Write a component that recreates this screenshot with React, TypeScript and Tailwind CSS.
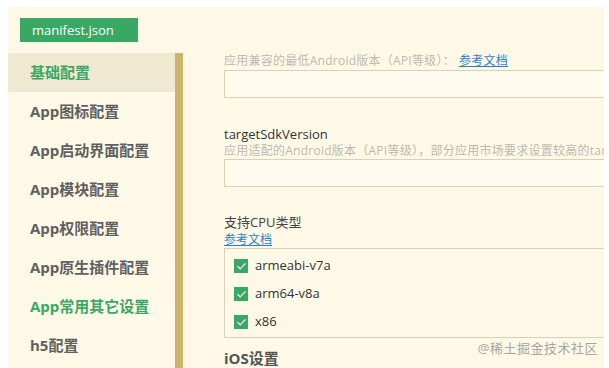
import { Check } from "lucide-react";

const menu = [
  { label: "基础配置", active: true },
  { label: "App图标配置" },
  { label: "App启动界面配置" },
  { label: "App模块配置" },
  { label: "App权限配置" },
  { label: "App原生插件配置" },
  { label: "App常用其它设置", green: true },
  { label: "h5配置" },
];

const cpus = ["armeabi-v7a", "arm64-v8a", "x86"];

const font = "font-['Open_Sans','Noto_Sans_CJK_SC',sans-serif]";

export default function App() {
  return (
    <div className={`w-[609px] h-[368px] bg-white overflow-hidden pl-2 pt-[7px] pr-[5px] relative ${font}`}>
      <div className="bg-[#fef9e7] h-full flex flex-col">
        {/* tab header */}
        <div className="h-[46px] shrink-0 pl-3 pt-[11px]">
          <div className="w-[118px] h-6 bg-[#3aa865] text-white text-[13px] leading-6 pl-[12px]">
            manifest.json
          </div>
        </div>

        <div className="flex flex-1 min-h-0">
          {/* sidebar */}
          <div className="w-[167px] shrink-0 flex flex-col">
            {menu.map((m) => (
              <div
                key={m.label}
                className={`h-[39px] shrink-0 flex items-center pl-[22px] text-[15px] font-bold ${
                  m.active ? "bg-[#f0e9d1] text-[#3aa865]" : m.green ? "text-[#3aa865]" : "text-[#606060]"
                }`}
              >
                {m.label}
              </div>
            ))}
          </div>
          <div className="w-2 shrink-0 bg-[#cdb46b]" />

          {/* content */}
          <div className="flex-1 min-w-0 overflow-hidden pl-[41px]">
            <div className="w-[390px]">
              <div className="text-[12px] leading-4 text-[#bdb9ad] whitespace-nowrap tracking-[0.25px]">
                应用兼容的最低Android版本（API等级）：
                <span className="text-[#2a7fd4] underline ml-1">参考文档</span>
              </div>
              <div className="mt-px h-7 border border-[#d9d3af] bg-[#fffbee]" />

              <div className="mt-[27px] text-[13px] leading-[18px] text-[#333]">targetSdkVersion</div>
              <div className="text-[12px] leading-4 text-[#bdb9ad] whitespace-nowrap tracking-[0.25px]">
                应用适配的Android版本（API等级），部分应用市场要求设置较高的targetSdkVersion
              </div>
              <div className="h-7 border border-[#d9d3af] bg-[#fffbee]" />

              <div className="mt-[26px] text-[13px] leading-[18px] text-[#444]">支持CPU类型</div>
              <div className="text-[12px] leading-4 mt-px text-[#2a7fd4] underline">参考文档</div>
              <div className="border border-[#d6d1b8] pt-[3px] pb-px pl-[9px]">
                {cpus.map((c) => (
                  <div key={c} className="h-7 flex items-center gap-[7px]">
                    <span className="w-[14px] h-[14px] bg-[#3aa865] flex items-center justify-center">
                      <Check size={11} strokeWidth={2.5} className="text-white" />
                    </span>
                    <span className="text-[13px] text-[#333]">{c}</span>
                  </div>
                ))}
              </div>

              <div className="mt-[10px] text-[15px] leading-5 font-bold text-[#555]">iOS设置</div>
            </div>
          </div>
        </div>
      </div>

      {/* watermark */}
      <div className="absolute right-[11px] bottom-[10px] text-[13px] text-[#a8a69e] tracking-[0.5px]">
        @稀土掘金技术社区
      </div>
    </div>
  );
}
